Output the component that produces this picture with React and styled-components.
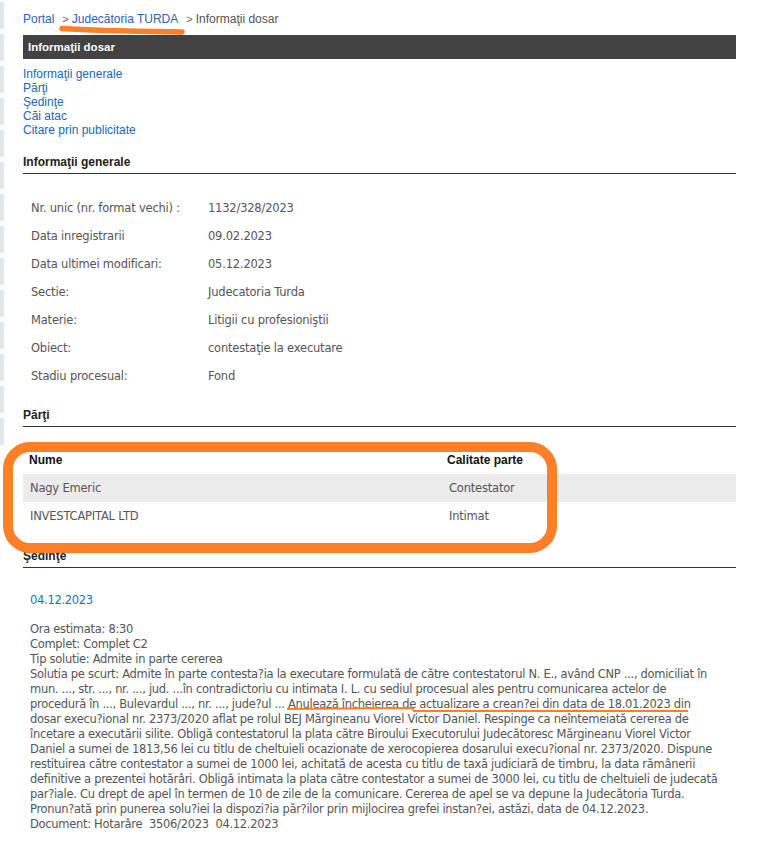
import React from "react";
import styled, { createGlobalStyle } from "styled-components";

const GlobalStyle = createGlobalStyle`
  body {
    margin: 0;
    background: #fff;
    font-family: "Liberation Sans", Arial, sans-serif;
  }
`;

const generalInfo = [
  ["Nr. unic (nr. format vechi) :", "1132/328/2023"],
  ["Data inregistrarii", "09.02.2023"],
  ["Data ultimei modificari:", "05.12.2023"],
  ["Sectie:", "Judecatoria Turda"],
  ["Materie:", "Litigii cu profesioniştii"],
  ["Obiect:", "contestaţie la executare"],
  ["Stadiu procesual:", "Fond"],
];

const parties = [
  ["Nagy Emeric", "Contestator"],
  ["INVESTCAPITAL LTD", "Intimat"],
];

const solutionLines = [
  "Ora estimata: 8:30",
  "Complet: Complet C2",
  "Tip solutie: Admite in parte cererea",
  "Solutia pe scurt: Admite în parte contesta?ia la executare formulată de către contestatorul N. E., având CNP ..., domiciliat în",
  "mun. ..., str. ..., nr. ..., jud. ...în contradictoriu cu intimata I. L. cu sediul procesual ales pentru comunicarea actelor de",
  "procedură în ..., Bulevardul ..., nr. ..., jude?ul ... Anulează încheierea de actualizare a crean?ei din data de 18.01.2023 din",
  "dosar execu?ional nr. 2373/2020 aflat pe rolul BEJ Mărgineanu Viorel Victor Daniel. Respinge ca neîntemeiată cererea de",
  "încetare a executării silite. Obligă contestatorul la plata către Biroului Executorului Judecătoresc Mărgineanu Viorel Victor",
  "Daniel a sumei de 1813,56 lei cu titlu de cheltuieli ocazionate de xerocopierea dosarului execu?ional nr. 2373/2020. Dispune",
  "restituirea către contestator a sumei de 1000 lei, achitată de acesta cu titlu de taxă judiciară de timbru, la data rămânerii",
  "definitive a prezentei hotărâri. Obligă intimata la plata către contestator a sumei de 3000 lei, cu titlu de cheltuieli de judecată",
  "par?iale. Cu drept de apel în termen de 10 de zile de la comunicare. Cererea de apel se va depune la Judecătoria Turda.",
  "Pronun?ată prin punerea solu?iei la dispozi?ia păr?ilor prin mijlocirea grefei instan?ei, astăzi, data de 04.12.2023.",
  "Document: Hotarâre\u00a0 3506/2023\u00a0 04.12.2023",
];

export default function App() {
  return (
    <>
      <GlobalStyle />
      <Page>
        <Strip>
          {Array.from({ length: 14 }).map((_, i) => (
            <StripBlock key={i} />
          ))}
        </Strip>
        <Main>
          <Breadcrumb>
            <Crumb href="#">Portal</Crumb>
            <Sep>&gt;</Sep>
            <Crumb href="#">Judecătoria TURDA</Crumb>
            <Sep>&gt;</Sep>
            <Current>Informaţii dosar</Current>
          </Breadcrumb>

          <TitleBar>Informaţii dosar</TitleBar>

          <NavList>
            <NavLink href="#">Informaţii generale</NavLink>
            <NavLink href="#">Părţi</NavLink>
            <NavLink href="#">Şedinţe</NavLink>
            <NavLink href="#">Căi atac</NavLink>
            <NavLink href="#">Citare prin publicitate</NavLink>
          </NavList>

          <SectionTitle $gap={18}>Informaţii generale</SectionTitle>
          <InfoTable>
            {generalInfo.map(([label, value]) => (
              <InfoRow key={label}>
                <span>{label}</span>
                <span>{value}</span>
              </InfoRow>
            ))}
          </InfoTable>

          <SectionTitle $gap={18}>Părţi</SectionTitle>
          <PartyTable>
            <PartyHead>
              <span>Nume</span>
              <span>Calitate parte</span>
            </PartyHead>
            {parties.map(([name, role], i) => (
              <PartyRow key={name} $shaded={i % 2 === 0}>
                <span>{name}</span>
                <span>{role}</span>
              </PartyRow>
            ))}
          </PartyTable>

          <SectionTitle $gap={19}>Şedinţe</SectionTitle>
          <HearingDate href="#">04.12.2023</HearingDate>
          <Solution>
            {solutionLines.map((line, i) => (
              <SolutionLine key={i}>{line}</SolutionLine>
            ))}
          </Solution>
        </Main>

        <Marks width="761" height="852" viewBox="0 0 761 852">
          <path
            d="M62 28.5 C100 31, 150 31.5, 182 32"
            stroke="#fd7f28"
            strokeWidth="5.5"
            strokeLinecap="round"
            fill="none"
          />
          <rect
            x="8"
            y="447"
            width="544"
            height="101"
            rx="22"
            stroke="#fd7f28"
            strokeWidth="10"
            fill="none"
          />
          <path
            d="M287 709 L412 708 L414 711 L688 711"
            stroke="#fd7f28"
            strokeWidth="2.2"
            fill="none"
          />
        </Marks>
      </Page>
    </>
  );
}

const Page = styled.div`
  position: relative;
  display: flex;
  width: 761px;
  min-height: 852px;
`;

const Strip = styled.div`
  width: 4px;
  padding-top: 2px;
  display: flex;
  flex-direction: column;
  gap: 5px;
`;

const StripBlock = styled.div`
  height: 27px;
  background: #e4e7ec;
`;

const Main = styled.div`
  margin-left: 19px;
  width: 713px;
`;

const Breadcrumb = styled.div`
  padding-top: 12px;
  font-size: 12px;
  line-height: 14px;
  color: #555;
  display: flex;
  white-space: nowrap;
`;

const Crumb = styled.a`
  color: #2a63ad;
  text-decoration: none;
`;

const Sep = styled.span`
  color: #666;
  font-size: 11px;
  margin: 0 3px 0 8px;
`;

const Current = styled.span`
  color: #555;
`;

const TitleBar = styled.div`
  margin-top: 9px;
  height: 24px;
  line-height: 24px;
  padding-left: 5px;
  background: #424242;
  color: #fff;
  font-weight: bold;
  font-size: 11.5px;
`;

const NavList = styled.div`
  margin-top: 8px;
  display: flex;
  flex-direction: column;
`;

const NavLink = styled.a`
  font-size: 12px;
  line-height: 14px;
  color: #2266b8;
  text-decoration: none;
`;

const SectionTitle = styled.div`
  margin-top: ${(p) => p.$gap}px;
  padding-bottom: 4px;
  border-bottom: 1px solid #333;
  font-size: 12px;
  line-height: 14px;
  font-weight: bold;
  color: #222;
`;

const InfoTable = styled.div`
  margin-top: 20px;
  display: flex;
  flex-direction: column;
`;

const InfoRow = styled.div`
  display: grid;
  grid-template-columns: 177px 1fr;
  height: 28px;
  align-items: center;
  padding-left: 8px;
  font-family: "DejaVu Sans", Verdana, sans-serif;
  font-size: 11.5px;
  letter-spacing: -0.2px;
  color: #555;
`;

const PartyTable = styled.div`
  margin-top: 19px;
  display: flex;
  flex-direction: column;
`;

const PartyHead = styled.div`
  display: grid;
  grid-template-columns: 418px 1fr;
  height: 28px;
  align-items: center;
  padding-left: 6px;
  font-size: 12px;
  font-weight: bold;
  color: #111;
`;

const PartyRow = styled.div`
  display: grid;
  grid-template-columns: 419px 1fr;
  height: 28px;
  align-items: center;
  padding-left: 7px;
  background: ${(p) => (p.$shaded ? "#ececec" : "transparent")};
  font-family: "DejaVu Sans", Verdana, sans-serif;
  font-size: 11.5px;
  letter-spacing: -0.2px;
  color: #555;
`;

const HearingDate = styled.a`
  display: block;
  margin-top: 25px;
  padding-left: 7px;
  font-family: "DejaVu Sans", Verdana, sans-serif;
  font-size: 11.5px;
  letter-spacing: -0.3px;
  line-height: 15px;
  color: #1a6fc4;
  text-decoration: none;
`;

const Solution = styled.div`
  margin-top: 14px;
  padding-left: 7px;
  display: flex;
  flex-direction: column;
  font-family: "DejaVu Sans", Verdana, sans-serif;
  font-size: 11.5px;
  letter-spacing: -0.3px;
  line-height: 15px;
  color: #555;
`;

const SolutionLine = styled.div`
  white-space: nowrap;
`;

const Marks = styled.svg`
  position: absolute;
  top: 0;
  left: 0;
  pointer-events: none;
`;
